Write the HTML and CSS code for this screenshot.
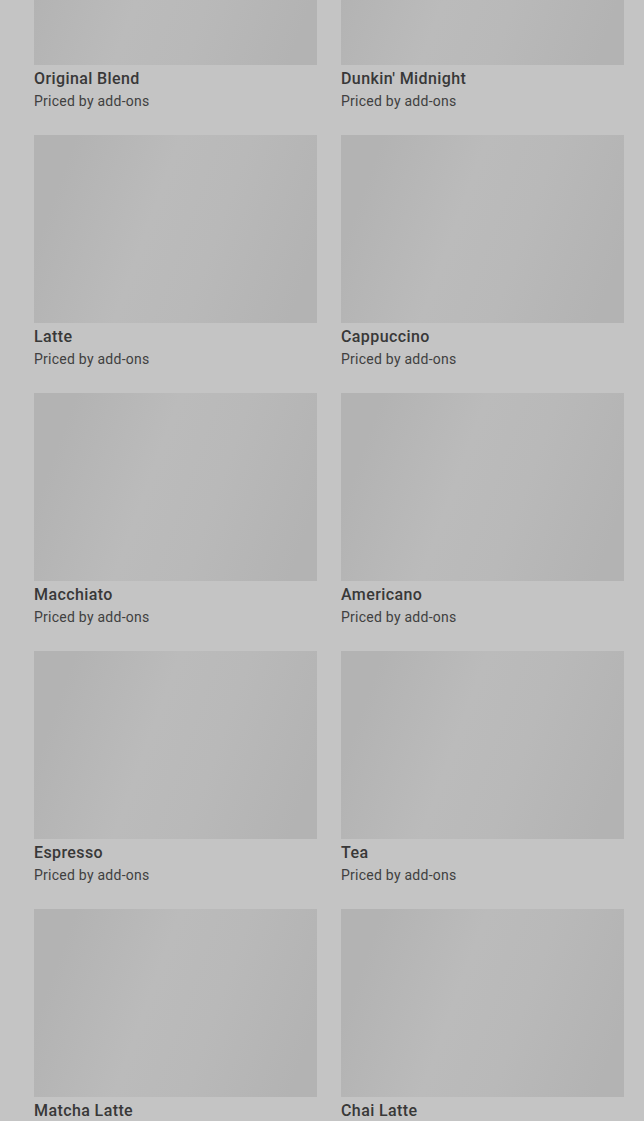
FILE: index.html
```html
<!DOCTYPE html>
<html>
<head>
<meta name="viewport" content="width=device-width, initial-scale=1.0">
<link rel="stylesheet" href="styles.css">
<title>Menu</title>
</head>
<body>
<div class="menu_grid">
  <div class="item">
    <div class="item_img"></div>
    <div class="item_name">Original Blend</div>
    <div class="item_price">Priced by add-ons</div>
  </div>
  <div class="item">
    <div class="item_img"></div>
    <div class="item_name">Dunkin' Midnight</div>
    <div class="item_price">Priced by add-ons</div>
  </div>
  <div class="item">
    <div class="item_img"></div>
    <div class="item_name">Latte</div>
    <div class="item_price">Priced by add-ons</div>
  </div>
  <div class="item">
    <div class="item_img"></div>
    <div class="item_name">Cappuccino</div>
    <div class="item_price">Priced by add-ons</div>
  </div>
  <div class="item">
    <div class="item_img"></div>
    <div class="item_name">Macchiato</div>
    <div class="item_price">Priced by add-ons</div>
  </div>
  <div class="item">
    <div class="item_img"></div>
    <div class="item_name">Americano</div>
    <div class="item_price">Priced by add-ons</div>
  </div>
  <div class="item">
    <div class="item_img"></div>
    <div class="item_name">Espresso</div>
    <div class="item_price">Priced by add-ons</div>
  </div>
  <div class="item">
    <div class="item_img"></div>
    <div class="item_name">Tea</div>
    <div class="item_price">Priced by add-ons</div>
  </div>
  <div class="item">
    <div class="item_img"></div>
    <div class="item_name">Matcha Latte</div>
    <div class="item_price">Priced by add-ons</div>
  </div>
  <div class="item">
    <div class="item_img"></div>
    <div class="item_name">Chai Latte</div>
    <div class="item_price">Priced by add-ons</div>
  </div>
</div>
</body>
</html>
```

FILE: styles.css
```css
html, body {
    margin: 0;
    background-color: #c4c4c4;
    overflow: hidden;
}

.menu_grid {
    display: grid;
    grid-template-columns: 283px 283px;
    column-gap: 24px;
    row-gap: 24px;
    padding: 0 20px 0 34px;
    margin-top: -123px;
    font-family: Roboto, "Liberation Sans", Arial, sans-serif;
}

.item_img {
    height: 188px;
    background: linear-gradient(110deg, #b3b3b3 12%, #bbbbbb 42%, #b9b9b9 62%, #b3b3b3 92%);
}

.item_name {
    margin-top: 3px;
    line-height: 22px;
    font-size: 16px;
    font-weight: 500;
    color: #383838;
    letter-spacing: 0.4px;
}

.item_price {
    margin-top: 1px;
    line-height: 20px;
    font-size: 14px;
    color: #404040;
    letter-spacing: 0.25px;
}
```
